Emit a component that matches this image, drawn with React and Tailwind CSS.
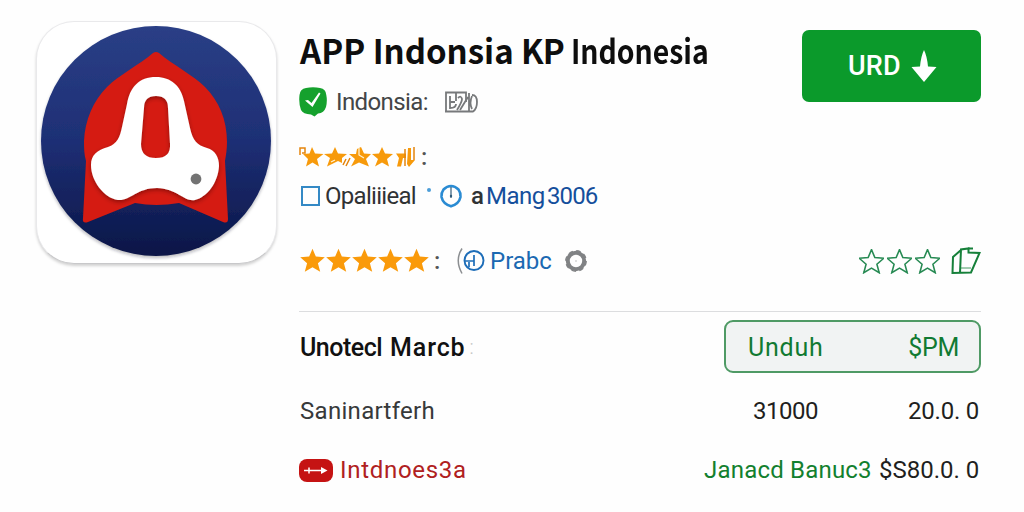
const STAR = "M12 0.6 L15.2 8.2 L23.800 8.9 L17.2 14.6 L19.4 22.8 L12 18.4 L4.6 22.8 L6.8 14.6 L0.200 8.9 L8.8 8.2 Z"

function Star({ className }) {
    return (
        <svg viewBox="0 0 24 24" className={className}>
            <path d={STAR} />
        </svg>
    )
}

function AppLogo() {
    return (
        <div className="w-[241px] h-[243px] rounded-[38px] bg-white border border-[#e9e9eb] border-b-[#c8c8ca] shadow-[0_2px_3px_rgba(0,0,0,0.18)] shrink-0">
            <svg viewBox="36 21 241 243" className="w-[241px] h-[243px] -ml-px -mt-px">
                <defs>
                    <linearGradient id="navy" x1="0" y1="0" x2="0" y2="1">
                        <stop offset="0" stopColor="#2a3f86" />
                        <stop offset="0.5" stopColor="#1e2f75" />
                        <stop offset="1" stopColor="#0a1647" />
                    </linearGradient>
                    <filter id="soft" x="-20%" y="-20%" width="140%" height="140%">
                        <feDropShadow dx="0" dy="2" stdDeviation="2" floodColor="#300" floodOpacity="0.45" />
                    </filter>
                    <filter id="disc" x="-20%" y="-20%" width="140%" height="140%">
                        <feDropShadow dx="0" dy="2" stdDeviation="1.5" floodColor="#223" floodOpacity="0.3" />
                    </filter>
                </defs>
                <circle cx="156" cy="141" r="115" fill="url(#navy)" filter="url(#disc)" />
                <path fill="#d51b12" d="M153 53 Q156 51 159 53 C173 65 193 75 205 87 C219 101 227 120 227 142 C227 149 226 155 225 161 L228 219 Q228 224 223 222 L179 203 Q156 207 135 203 L88 222 Q82 224 83 218 L86 161 C84 154 84 148 84 141 C85 120 93 101 107 87 C119 75 139 65 153 53 Z" />
                <g filter="url(#soft)">
                    <path fill="#fff" fillRule="evenodd" d="M156 77 C171 77 181 86 184 101 L190 128 C193 141 197 145 207 148 C215 150 219 157 219 166 C218 183 207 197 195 200 C184 202 178 189 157 188 C137 188 130 201 118 200 C104 198 91 181 91 165 C91 155 97 150 108 147 C117 144 120 137 122 127 L127 104 C130 87 139 77 156 77 Z M156 96 Q144 96 144 108 L141 144 Q141 158 156 158 Q171 158 170 144 L168 108 Q168 96 156 96 Z" />
                </g>
                <circle cx="196" cy="179" r="5.4" fill="#737373" />
            </svg>
        </div>
    )
}

function CheckBadge() {
    return (
        <svg viewBox="0 0 28 30" className="w-[28px] h-[30px]">
            <path fill="#15a12d" d="M7 1 Q14 -0.5 21 1 Q27 2 27.300 8 Q28.500 14 27 20 Q25 26 19 26.500 L15.500 29.500 L12 27.500 Q4 27 2 23 Q-0.500 16 0.500 8 Q1 2 7 1 Z" />
            <path fill="#fff" d="M6 13.500 L9 13 L12.500 16 L20 5.500 L21.500 6.500 L13.500 20 Z" />
        </svg>
    )
}

function PlateIcon() {
    return (
        <svg viewBox="0 0 34 22" className="w-[34px] h-[22px]" fill="none" stroke="#77797b" strokeWidth="1.800">
            <path d="M1 20.500 H29 Q33 18 33 11 Q33 4 28 4 M2 20 V1.500 H22 V11" />
            <path d="M6 5 V18 M6 11 H11 M12 2 V10 M12 13 Q12 17 6 17" />
            <path d="M14 7 Q17 4 18 8 Q18 11 13 19 M16 19 L24 6 M25 2 V20 M28 5 Q25 12 28 18" />
        </svg>
    )
}

function BrokenStars() {
    return (
        <svg viewBox="0 0 118 22" className="w-[118px] h-[22px]">
            <g fill="#f79a0b">
                <path d="M13 1 L16 7.500 L24.500 8 L18 13 L20 20.500 L13.500 16.500 L7 20.500 L9 13 L4 8 L10.500 7.500 Z" />
                <path d="M36 1 L39 7.500 L48 8 L43 12 L43 17 L39 15 L35 17 L28 20.500 L31 12 L25 8 L33 7.500 Z" />
                <path d="M58 3 L62 1 L65 7.500 L72 8 L67 13 L70 20.500 L60 16.500 L52 20.500 L56 13 L50 8 L57 8 Z" />
                <path d="M83 1 L86 7.500 L94 8 L88 13 L90 20.500 L83 16.500 L76 20.500 L79 13 L73 8 L80 7.500 Z" />
                <path d="M97 7.500 H107 V12 H104 L102 20.500 H98 L100 12 Z" />
                <path d="M109 2 H112 V14 H116 L110 21 L108 18 Z" />
            </g>
            <path fill="none" stroke="#e5850c" strokeWidth="1.500" d="M1 9 V2 H6 V7 H3 M47 13 L44 19 M51 12 L47 20 M106 3 V20 M115 1 V14" />
            <path fill="none" stroke="#fff3d6" strokeWidth="1.200" d="M60 2 V9 L65 12 M36 14 L32 16" />
        </svg>
    )
}

function ClockIcon() {
    return (
        <svg viewBox="0 0 24 24" className="w-[24px] h-[24px]" fill="none">
            <path stroke="#2a8bd3" strokeWidth="2.600" d="M12 2 Q16 2 19.500 5.500 Q22 9 21.500 13 Q20 20 12 22.300 Q4 20 2.500 13 Q2 9 4.500 5.500 Q8 2 12 2 Z" />
            <path stroke="#315a78" strokeWidth="1.200" d="M12 3 V14" />
            <circle cx="12" cy="12" r="1.200" fill="#315a78" />
        </svg>
    )
}

function CircleMark() {
    return (
        <svg viewBox="0 0 30 28" className="w-[30px] h-[28px]" fill="none">
            <path stroke="#8b8e91" strokeWidth="1.500" d="M6 1.500 Q-1.500 13 6 26.500" />
            <circle cx="18" cy="13.500" r="9.500" stroke="#1d6db8" strokeWidth="1.900" />
            <path stroke="#1d6db8" strokeWidth="1.700" d="M9 14 H18 M13 15 V20 M18 8 V19" />
        </svg>
    )
}

function GearRing() {
    return (
        <svg viewBox="0 0 24 24" className="w-[24px] h-[24px]" fill="none">
            <circle cx="12" cy="12" r="8.200" stroke="#808284" strokeWidth="4" />
            <circle cx="12" cy="12" r="10.200" stroke="#808284" strokeWidth="1.400" strokeDasharray="4.500 3.500" />
            <circle cx="12" cy="12" r="0.700" fill="#aaa" />
        </svg>
    )
}

function FoldedIcon() {
    return (
        <svg viewBox="0 0 30 28" className="w-[30px] h-[28px]" fill="none" stroke="#16803a" strokeWidth="2">
            <path d="M10 3 L2 10 L1.500 26 L20 25.500 L28.500 6 L17.500 5.500 V1.500 L10 2.500 L9 26" />
            <path d="M17 1.500 H22" />
            <path d="M9 21 H20" strokeWidth="0.800" />
        </svg>
    )
}

function RedBadge() {
    return (
        <svg viewBox="0 0 34 23" className="w-[34px] h-[23px]">
            <rect width="34" height="23" rx="8" fill="#c51313" />
            <path fill="none" stroke="#fff" strokeWidth="1.500" d="M5 11.500 H18 M10 8.500 V14.500 M17 11.500 H22" />
            <path fill="#fff" d="M22 8 L28.500 11.500 L22 15 Z" />
        </svg>
    )
}

function App() {
    return (
        <main className="flex w-[1024px] h-[512px] bg-[#fefefe] pl-[36px] overflow-hidden whitespace-nowrap text-[24px] leading-none font-['Roboto',sans-serif]">
            <div className="pt-[21px] shrink-0">
                <AppLogo />
            </div>
            <div className="w-[682px] ml-[22px] pt-[30px] shrink-0">
                <header className="flex justify-between h-[90px]">
                    <div className="w-[460px]">
                        <h1 className="flex items-center h-[42px] -mt-px ml-px text-[33px] font-bold text-[#0e0e0e] font-['Noto_Sans_CJK_SC',sans-serif]">
                            <span className="w-[221px] shrink-0">APP Indonsia</span>
                            <span className="w-[50px] shrink-0 tracking-[-1px]">KP</span>
                            <span className="shrink-0 origin-left scale-x-[0.860]">Indonesia</span>
                        </h1>
                        <div className="flex items-center h-[36px] mt-[13px] text-[#434547]">
                            <CheckBadge />
                            <span className="w-[108px] ml-[9px] tracking-[-0.600px]">Indonsia:</span>
                            <PlateIcon />
                        </div>
                    </div>
                    <button className="flex items-center w-[179px] h-[72px] pl-[46px] rounded-[7px] bg-[#0b9a2b] text-white text-[27px] font-medium">
                        <span className="w-[63px] text-left tracking-[0.2px]">URD</span>
                        <svg viewBox="0 0 26 32" className="w-[26px] h-[32px]">
                            <path fill="#fff" d="M13 0 Q16 6 17 16.500 L25.500 17 L13 32 L0.500 17 L9 16.500 Q10 6 13 0 Z" />
                        </svg>
                    </button>
                </header>

                <div className="flex items-center h-[24px] mt-[25px] text-[#555]">
                    <BrokenStars />
                    <span className="ml-[4px] font-medium">:</span>
                </div>

                <div className="flex items-center h-[32px] mt-[11px] text-[#303234]">
                    <span className="w-[19px] h-[20px] ml-[2px] border-2 border-[#3489c5]"></span>
                    <span className="w-[102px] ml-[5px] tracking-[-0.7px]">Opaliiieal</span>
                    <span className="w-[4px] h-[4px] mb-[12px] rounded-full bg-[#4c9ed8]"></span>
                    <span className="ml-[8px]"><ClockIcon /></span>
                    <span className="w-[15px] ml-[8px] font-medium">a</span>
                    <span className="w-[61px] text-[#154f9c] tracking-[-0.5px]">Mang</span>
                    <span className="text-[#154f9c] tracking-[-0.900px]">3006</span>
                </div>

                <div className="flex items-center justify-between h-[36px] mt-[31px]">
                    <div className="flex items-center text-[#1b69b2]">
                        <div className="flex gap-[1px] -mt-[2px] ml-px fill-[#fa9a0a]">
                            {[1, 2, 3, 4, 5].map((n) => <Star key={n} className="w-[25px] h-[25px]" />)}
                        </div>
                        <span className="w-[22px] ml-[5px] text-[#555] font-medium">:</span>
                        <CircleMark />
                        <span className="w-[74px] ml-[4px]">Prabc</span>
                        <GearRing />
                    </div>
                    <div className="flex items-center">
                        <div className="flex gap-[3px] mr-[11px] fill-none stroke-[#278a53] stroke-[1.500]">
                            {[1, 2, 3].map((n) => <Star key={n} className="w-[25px] h-[25px]" />)}
                        </div>
                        <FoldedIcon />
                    </div>
                </div>

                <hr className="mt-[32px] border-t border-[#dcdddf]" />

                <section className="flex justify-between mt-[8px]">
                    <h2 className="flex items-center h-[54px] ml-px text-[25px] font-medium text-[#111]">
                        <span className="w-[90px] tracking-[-0.5px]">Unotecl</span>
                        <span className="tracking-[0.9px]">Marcb</span>
                        <span className="ml-[4px] font-light text-[20px] text-[#c5c5c5]">:</span>
                    </h2>
                    <div className="flex items-center justify-between w-[257px] h-[53px] pt-[2px] pl-[22px] pr-[20px] rounded-[9px] border-2 border-[#4f9a65] bg-[#f1f3f3] text-[25px] text-[#117a32]">
                        <span className="tracking-[0.8px]">Unduh</span>
                        <span className="tracking-[-0.3px]">$PM</span>
                    </div>
                </section>

                <section className="flex items-center h-[34px] mt-[20px] text-[#1f1f20]">
                    <span className="w-[453px] ml-px text-[#37393a] tracking-[0.300px]">Saninartferh</span>
                    <span className="w-[155px] tracking-[-0.5px]">31000</span>
                    <span className="tracking-[-0.2px]">20.0. 0</span>
                </section>

                <section className="flex items-center h-[34px] mt-[25px] text-[#1f1f20]">
                    <RedBadge />
                    <span className="w-[364px] ml-[7px] text-[#b02020] tracking-[0.700px]">Intdnoes3a</span>
                    <span className="w-[175px] text-[#12802e] tracking-[0.200px]">Janacd Banuc3</span>
                    <span>$S80.0. 0</span>
                </section>
            </div>
        </main>
    )
}

export default App
